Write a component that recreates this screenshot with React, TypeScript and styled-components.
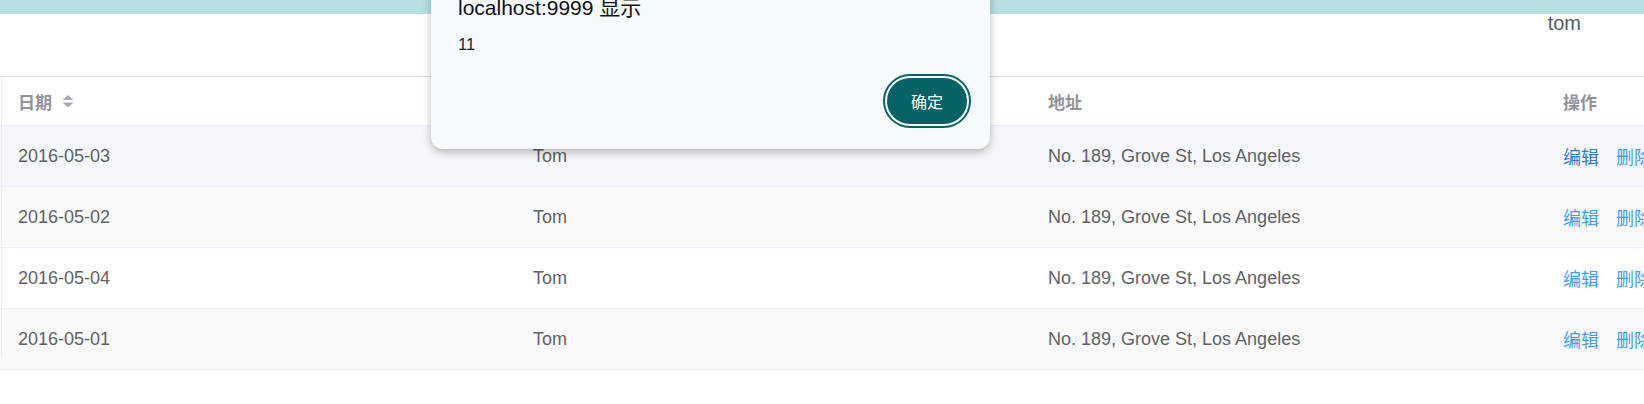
import styled, { createGlobalStyle } from 'styled-components';

const GlobalStyle = createGlobalStyle`
	html, body {
		margin: 0;
		padding: 0;
		overflow: hidden;
		background: #fff;
		font-family: 'Liberation Sans', 'Noto Sans CJK SC', sans-serif;
	}
`;

const rows = [
	{ date: '2016-05-03', name: 'Tom', address: 'No. 189, Grove St, Los Angeles', bg: '#f5f7fa' },
	{ date: '2016-05-02', name: 'Tom', address: 'No. 189, Grove St, Los Angeles', bg: '#fafafa' },
	{ date: '2016-05-04', name: 'Tom', address: 'No. 189, Grove St, Los Angeles', bg: '#ffffff' },
	{ date: '2016-05-01', name: 'Tom', address: 'No. 189, Grove St, Los Angeles', bg: '#fafafa' },
];

const SortCaret = () => (
	<svg width="12" height="13" viewBox="0 0 12 13">
		<path d="M6 0 L11.5 5 L0.5 5 Z" fill="#a8abb2" />
		<path d="M0.5 7.5 L11.5 7.5 L6 12.5 Z" fill="#a8abb2" />
	</svg>
);

const App = () => {
	return (
		<Page>
			<GlobalStyle />
			<TopBar />
			<Header>
				<UserName>tom</UserName>
			</Header>
			<Table>
				<HeadRow>
					<HeadCell>
						日期
						<SortCaret />
					</HeadCell>
					<HeadCell>姓名</HeadCell>
					<HeadCell>地址</HeadCell>
					<HeadCell>操作</HeadCell>
				</HeadRow>
				{rows.map((row, i) => (
					<BodyRow key={i} $bg={row.bg}>
						<Cell>{row.date}</Cell>
						<Cell>{row.name}</Cell>
						<Cell>{row.address}</Cell>
						<Cell>
							<LinkBtn $dark={i === 0}>编辑</LinkBtn>
							<LinkBtn>删除</LinkBtn>
						</Cell>
					</BodyRow>
				))}
			</Table>

			{/* browser alert() on top of the page */}
			<AlertBox>
				<AlertTitle>localhost:9999 显示</AlertTitle>
				<AlertMessage>11</AlertMessage>
				<AlertFooter>
					<OkButton>确定</OkButton>
				</AlertFooter>
			</AlertBox>
		</Page>
	);
};

export default App;

const Page = styled.div`
	position: relative;
	width: 1644px;
	height: 404px;
	overflow: hidden;
`;

const TopBar = styled.div`
	height: 14px;
	background: #b8e0e4;
`;

const Header = styled.div`
	height: 62px;
	display: flex;
	justify-content: flex-end;
	align-items: flex-start;
	padding-right: 63px;
	box-sizing: border-box;
`;

const UserName = styled.div`
	font-size: 20px;
	line-height: 18px;
	color: #555a63;
`;

const Table = styled.div`
	position: relative;
	width: 2061px;
	border-top: 1px solid #d6d8dc;
	&::before {
		content: '';
		position: absolute;
		left: 1px;
		top: 0;
		width: 1px;
		height: calc(100% - 12px);
		background: #ebeef5;
	}
`;

const HeadRow = styled.div`
	display: grid;
	grid-template-columns: repeat(4, 515px);
	padding-left: 1px;
	height: 48px;
	border-bottom: 1px solid #ebeef5;
`;

const HeadCell = styled.div`
	display: flex;
	align-items: center;
	gap: 10px;
	padding-left: 17px;
	font-size: 17px;
	font-weight: 700;
	color: #909399;
	font-family: 'Noto Sans CJK SC', sans-serif;
`;

const BodyRow = styled.div<{ $bg: string }>`
	display: grid;
	grid-template-columns: repeat(4, 515px);
	padding-left: 1px;
	height: 60px;
	background: ${(p) => p.$bg};
	border-bottom: 1px solid #ebeef5;
`;

const Cell = styled.div`
	display: flex;
	align-items: center;
	gap: 17px;
	padding-left: 17px;
	font-size: 18px;
	color: #606266;
`;

const LinkBtn = styled.span<{ $dark?: boolean }>`
	font-size: 18px;
	font-family: 'Noto Sans CJK SC', sans-serif;
	color: ${(p) => (p.$dark ? '#337ecc' : '#409eff')};
	cursor: pointer;
`;

const AlertBox = styled.div`
	position: absolute;
	left: 431px;
	top: -26px;
	width: 559px;
	box-sizing: border-box;
	padding: 20px 19px 21px 27px;
	background: #f6fafd;
	border-radius: 12px;
	box-shadow: 0 3px 8px rgba(0, 0, 0, 0.28);
`;

const AlertTitle = styled.div`
	font-size: 21px;
	line-height: 28px;
	color: #111;
`;

const AlertMessage = styled.div`
	margin-top: 12px;
	font-size: 16.5px;
	line-height: 20px;
	color: #222;
`;

const AlertFooter = styled.div`
	margin-top: 20px;
	display: flex;
	justify-content: flex-end;
`;

const OkButton = styled.button`
	width: 84px;
	height: 50px;
	margin: 2px;
	border-radius: 25px;
	border: 2px solid #fff;
	outline: 2px solid #056366;
	background: #056366;
	color: #fff;
	font-size: 16px;
	font-family: 'Noto Sans CJK SC', sans-serif;
	padding: 0;
`;
